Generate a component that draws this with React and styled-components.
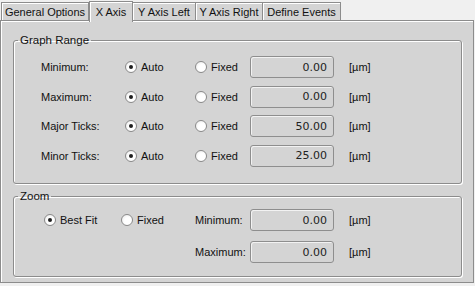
import React from 'react'
import styled, { createGlobalStyle } from 'styled-components'

const Global = createGlobalStyle`
body {
  margin: 0;
  background: #f0f0f0;
  font-family: "Liberation Sans", Arial, sans-serif;
  font-size: 11px;
  color: #111;
}
`

const Window = styled.div`
width: 475px;
height: 286px;
display: flex;
flex-direction: column;
`

const TabStrip = styled.div`
display: flex;
align-items: flex-end;
height: 21px;
padding-left: 1px;
position: relative;
z-index: 2;
`

const Tab = styled.div`
box-sizing: border-box;
width: ${p => p.w}px;
height: ${p => (p.active ? 21 : 19)}px;
margin-bottom: ${p => (p.active ? -1 : 0)}px;
display: flex;
align-items: center;
justify-content: center;
padding-top: ${p => (p.active ? 0 : 1)}px;
background: #d4d4d4;
border: 1px solid #8c8c8c;
border-bottom: ${p => (p.active ? 'none' : '1px solid #8c8c8c')};
border-left-width: ${p => (p.first || p.active ? 1 : 0)}px;
box-shadow: inset 1px 1px 0 #fff;
white-space: nowrap;
`

const Panel = styled.div`
box-sizing: border-box;
width: 474px;
height: 263px;
margin-top: -1px;
background: #d4d4d4;
border: 1px solid #8c8c8c;
box-shadow: inset 1px 1px 0 #fff;
padding: 13px 11px 0 12px;
display: flex;
flex-direction: column;
gap: 6px;
`

const Group = styled.fieldset`
box-sizing: border-box;
margin: 0;
height: ${p => p.h}px;
border: 1px solid #8c8c8c;
border-radius: 3px;
box-shadow: 1px 1px 0 #fff, inset 1px 1px 0 #fff;
padding: ${p => p.top}px 0 0 0;
min-width: 0;
`

const Legend = styled.legend`
padding: 0 2px;
margin-left: 4px;
font-size: 11.5px;
`

const RangeGrid = styled.div`
display: grid;
grid-template-columns: 84px 70px 55px 84px auto;
grid-auto-rows: 22px;
row-gap: 7.5px;
align-items: center;
padding-left: 27px;
`

const ZoomGrid = styled.div`
display: grid;
grid-template-columns: 77px 74px 55px 84px auto;
grid-template-rows: 22px 22px;
row-gap: 10px;
align-items: center;
padding-left: 30px;
`

const Label = styled.span`
white-space: nowrap;
`

const Unit = styled.span`
padding-left: 15px;
`

const Choice = styled.label`
display: flex;
align-items: center;
gap: 4px;
white-space: nowrap;
`

const Circle = styled.span`
box-sizing: border-box;
width: 12px;
height: 12px;
border-radius: 50%;
border: 1px solid #8a8a8a;
background: radial-gradient(circle at 60% 60%, #ffffff 40%, #e6e6e6 100%);
display: flex;
align-items: center;
justify-content: center;
&::after {
  content: '';
  width: 4px;
  height: 4px;
  border-radius: 50%;
  background: ${p => (p.on ? '#1e1e1e' : 'transparent')};
}
`

const Field = styled.div`
box-sizing: border-box;
width: 84px;
height: 22px;
border: 1px solid #8e8e8e;
border-radius: 3px;
box-shadow: inset 1px 1px 0 #f2f2f2;
display: flex;
align-items: center;
justify-content: flex-end;
padding-right: 6px;
font-family: "DejaVu Sans", sans-serif;
font-size: 11px;
color: #222;
`

const Radio = ({ on, children }) => (
  <Choice>
    <Circle on={on} />
    {children}
  </Choice>
)

const tabs = [
  { t: 'General Options', w: 88, first: true },
  { t: 'X Axis', w: 44, active: true },
  { t: 'Y Axis Left', w: 63 },
  { t: 'Y Axis Right', w: 67 },
  { t: 'Define Events', w: 78 },
]

const rows = [
  ['Minimum:', '0.00'],
  ['Maximum:', '0.00'],
  ['Major Ticks:', '50.00'],
  ['Minor Ticks:', '25.00'],
]

const App = () => {
  return (
    <>
      <Global />
      <Window>
        <TabStrip>
          {tabs.map(tab => (
            <Tab key={tab.t} w={tab.w} active={tab.active} first={tab.first}>
              {tab.t}
            </Tab>
          ))}
        </TabStrip>
        <Panel>
          <Group h={150} top={10}>
            <Legend>Graph Range</Legend>
            <RangeGrid>
              {rows.map(([name, val]) => (
                <React.Fragment key={name}>
                  <Label>{name}</Label>
                  <Radio on>Auto</Radio>
                  <Radio>Fixed</Radio>
                  <Field>{val}</Field>
                  <Unit>[µm]</Unit>
                </React.Fragment>
              ))}
            </RangeGrid>
          </Group>
          <Group h={87} top={7}>
            <Legend>Zoom</Legend>
            <ZoomGrid>
              <Radio on>Best Fit</Radio>
              <Radio>Fixed</Radio>
              <Label>Minimum:</Label>
              <Field>0.00</Field>
              <Unit>[µm]</Unit>
              <span />
              <span />
              <Label>Maximum:</Label>
              <Field>0.00</Field>
              <Unit>[µm]</Unit>
            </ZoomGrid>
          </Group>
        </Panel>
      </Window>
    </>
  )
}

export default App
